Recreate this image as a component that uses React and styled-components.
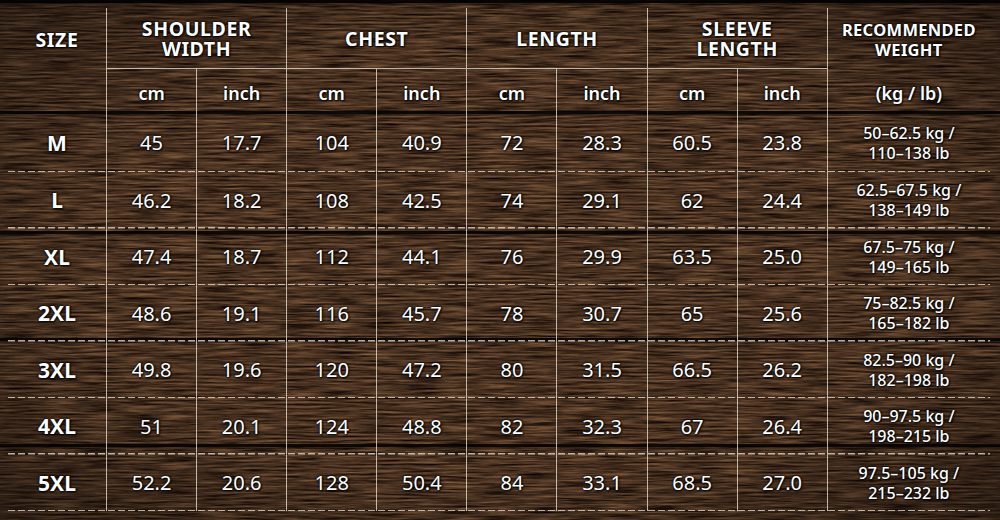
import React from "react";
import styled, { createGlobalStyle } from "styled-components";

const Global = createGlobalStyle`
  html, body { margin: 0; padding: 0; background: #2a1d14; }
  body { font-family: "Noto Sans", "Open Sans", sans-serif; }
`;

const LINE = "rgba(228, 220, 206, 0.8)";
const COLS = "99px repeat(8, 90.1px) 1fr";

const Board = styled.div`
  position: relative;
  width: 1000px;
  height: 520px;
  overflow: hidden;
  background: #3f2c1e;

  &::after {
    content: "";
    position: absolute;
    inset: 0;
    z-index: 1;
    pointer-events: none;
    background:
      radial-gradient(ellipse at 50% 50%, rgba(0,0,0,0) 60%, rgba(0,0,0,0.4) 100%),
      linear-gradient(180deg,
        rgba(0,0,0,0.9) 0 3px, rgba(0,0,0,0.25) 3px 5px, rgba(0,0,0,0) 5px 111px,
        rgba(0,0,0,0.85) 111px 114px, rgba(0,0,0,0.25) 114px 116px, rgba(0,0,0,0) 116px 231px,
        rgba(0,0,0,0.85) 231px 234px, rgba(0,0,0,0.25) 234px 236px, rgba(0,0,0,0) 236px 338px,
        rgba(0,0,0,0.85) 338px 341px, rgba(0,0,0,0.25) 341px 343px, rgba(0,0,0,0) 343px 444px,
        rgba(0,0,0,0.85) 444px 447px, rgba(0,0,0,0.25) 447px 449px, rgba(0,0,0,0) 449px 520px);
  }
`;

const Texture = styled.svg`
  position: absolute;
  inset: 0;
  width: 100%;
  height: 100%;
  z-index: 0;
  display: block;
`;

const Table = styled.div`
  position: relative;
  z-index: 2;
  margin: 8px 10px 0 8px;
  display: flex;
  flex-direction: column;
  color: #fff;
  text-shadow: 0 0 2px rgba(0,0,0,1), 0 0 3px rgba(0,0,0,0.8), 1px 1px 2px rgba(0,0,0,0.9);
`;

const Head = styled.div`
  display: grid;
  grid-template-columns: ${COLS};
  grid-template-rows: 61px 44px;
`;

const Cell = styled.div`
  box-sizing: border-box;
  display: flex;
  flex-direction: column;
  align-items: center;
  justify-content: center;
  text-align: center;
  border-right: ${(p) => (p.$last ? "none" : `1px solid ${LINE}`)};
`;

const HeadCell = styled(Cell)`
  grid-column: span ${(p) => p.$span || 1};
  border-bottom: ${(p) => (p.$rule ? `1px solid ${LINE}` : "none")};
  font-weight: 700;
  font-size: ${(p) => (p.$small ? "16.5px" : "19.5px")};
  line-height: 20px;
  letter-spacing: ${(p) => (p.$small ? "0.3px" : "0.6px")};
  padding-top: 2px;
`;

const UnitCell = styled(Cell)`
  font-weight: 600;
  font-size: 18px;
  padding-top: 4px;
`;

const Body = styled.div`
  display: flex;
  flex-direction: column;
`;

const Row = styled.div`
  display: grid;
  grid-template-columns: ${COLS};
  height: 56.5px;
  background: repeating-linear-gradient(90deg, rgba(222, 212, 196, 0.8) 0 7px, transparent 7px 10px) left bottom / 100% 1.5px no-repeat;
  &:first-child { height: 59px; }
`;

const SizeCell = styled(Cell)`
  font-weight: 700;
  font-size: 21px;
`;

const NumCell = styled(Cell)`
  font-weight: 400;
  font-size: 20px;
`;

const WeightCell = styled(Cell)`
  font-weight: 500;
  font-size: 16px;
  line-height: 20px;
`;

const groups = [
  ["SHOULDER", "WIDTH"],
  ["CHEST"],
  ["LENGTH"],
  ["SLEEVE", "LENGTH"],
];

const rows = [
  ["M", "45", "17.7", "104", "40.9", "72", "28.3", "60.5", "23.8", "50–62.5 kg /", "110–138 lb"],
  ["L", "46.2", "18.2", "108", "42.5", "74", "29.1", "62", "24.4", "62.5–67.5 kg /", "138–149 lb"],
  ["XL", "47.4", "18.7", "112", "44.1", "76", "29.9", "63.5", "25.0", "67.5–75 kg /", "149–165 lb"],
  ["2XL", "48.6", "19.1", "116", "45.7", "78", "30.7", "65", "25.6", "75–82.5 kg /", "165–182 lb"],
  ["3XL", "49.8", "19.6", "120", "47.2", "80", "31.5", "66.5", "26.2", "82.5–90 kg /", "182–198 lb"],
  ["4XL", "51", "20.1", "124", "48.8", "82", "32.3", "67", "26.4", "90–97.5 kg /", "198–215 lb"],
  ["5XL", "52.2", "20.6", "128", "50.4", "84", "33.1", "68.5", "27.0", "97.5–105 kg /", "215–232 lb"],
];

function Wood() {
  return (
    <Texture viewBox="0 0 1000 520" preserveAspectRatio="none" aria-hidden="true">
      <defs>
        <filter id="grain" x="0" y="0" width="100%" height="100%" colorInterpolationFilters="sRGB">
          <feTurbulence type="fractalNoise" baseFrequency="0.025 0.5" numOctaves="4" seed="5" result="n" />
          <feColorMatrix
            in="n"
            type="matrix"
            values="0.62 0 0 0 -0.03
                    0.46 0 0 0 -0.04
                    0.31 0 0 0 -0.03
                    0 0 0 0 1"
          />
        </filter>
      </defs>
      <rect x="0" y="0" width="1000" height="520" filter="url(#grain)" />
    </Texture>
  );
}

export default function App() {
  return (
    <Board>
      <Global />
      <Wood />
      <Table>
        <Head>
          <HeadCell>SIZE</HeadCell>
          {groups.map((g, i) => (
            <HeadCell key={i} $span={2} $rule>
              {g.map((l) => (
                <span key={l}>{l}</span>
              ))}
            </HeadCell>
          ))}
          <HeadCell $last $small>
            <span>RECOMMENDED</span>
            <span>WEIGHT</span>
          </HeadCell>
          <UnitCell />
          {groups.map((g, i) => (
            <React.Fragment key={i}>
              <UnitCell>cm</UnitCell>
              <UnitCell>inch</UnitCell>
            </React.Fragment>
          ))}
          <UnitCell $last>(kg / lb)</UnitCell>
        </Head>
        <Body>
          {rows.map((r) => (
            <Row key={r[0]}>
              <SizeCell>{r[0]}</SizeCell>
              {r.slice(1, 9).map((v, i) => (
                <NumCell key={i}>{v}</NumCell>
              ))}
              <WeightCell $last>
                <span>{r[9]}</span>
                <span>{r[10]}</span>
              </WeightCell>
            </Row>
          ))}
        </Body>
      </Table>
    </Board>
  );
}
